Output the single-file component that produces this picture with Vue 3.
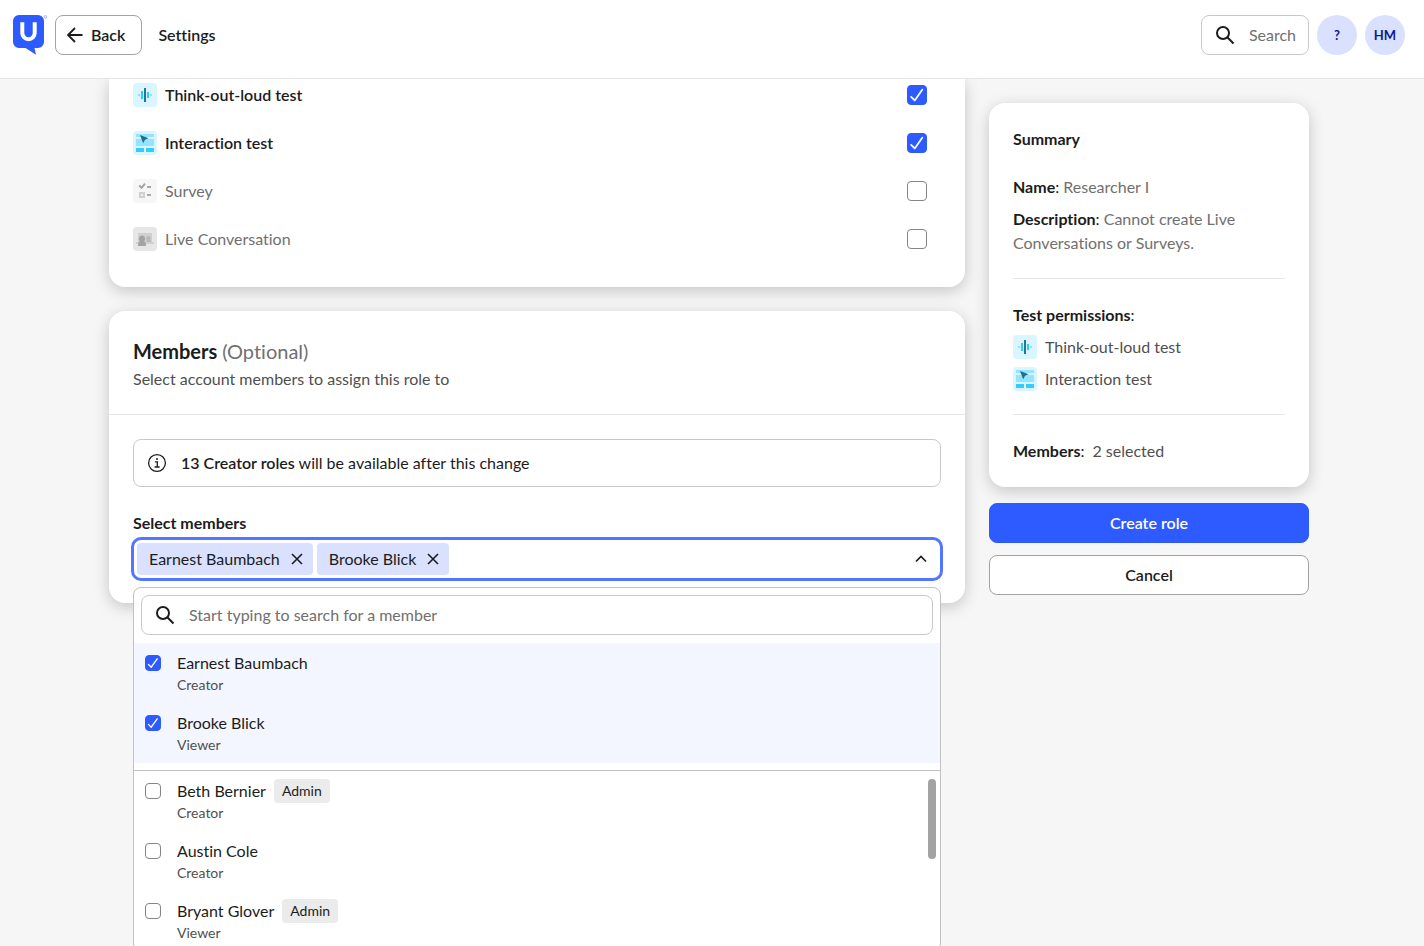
<template>
  <div class="app">
    <header class="topbar">
      <a href="#" class="logo" aria-label="Home">
        <svg width="34" height="40" viewBox="0 0 34 40">
          <path d="M6 0h19a6 6 0 0 1 6 6v21a6 6 0 0 1-6 6h-3.500l1.500 6.800L12.500 33H6a6 6 0 0 1-6-6V6a6 6 0 0 1 6-6z" fill="#2e5bff" />
          <path d="M9.300 7.200v10.800a6.200 6.200 0 0 0 12.400 0V7.200" fill="none" stroke="#fff" stroke-width="4" />
          <circle cx="32.400" cy="1.900" r="1.300" fill="none" stroke="#8aa3ff" stroke-width="0.800" />
        </svg>
      </a>
      <button type="button" class="back-btn">
        <svg width="16" height="16" viewBox="0 0 16 16">
          <path d="M15.500 8H1.200M8 1L1 8l7 7" fill="none" stroke="#1c1c1c" stroke-width="1.800" />
        </svg>
        Back
      </button>
      <span class="page-name">Settings</span>
      <div class="topbar-actions">
        <button type="button" class="search-btn">
          <svg class="search-icon" viewBox="0 0 20 20">
            <circle cx="8" cy="8" r="6" />
            <path d="M12.300 12.300L18.500 18.500" />
          </svg>
          Search
        </button>
        <button type="button" class="round-btn">?</button>
        <button type="button" class="round-btn">HM</button>
      </div>
    </header>

    <div class="scroller">
      <main class="content">
        <div class="main-col">
          <section class="card tests-card">
            <label v-for="test in tests" :key="test.id" class="test-row" :class="{ on: test.checked }">
              <svg class="test-icon" viewBox="0 0 24 24">
                <g v-if="test.id === 'tol'">
                  <rect width="24" height="24" rx="4" fill="#d9f5ff" />
                  <path d="M11 5h2v14h-2z" fill="#1b7a99" />
                  <path d="M8 8h2v8H8zM14 9h2v6h-2z" fill="#33c9fa" />
                  <path d="M5 11h2v2H5zM17 11h2v2h-2z" fill="#8de1fc" />
                </g>
                <g v-else-if="test.id === 'interaction'">
                  <rect width="24" height="24" rx="4" fill="#d9f5ff" />
                  <path d="M3 3h18v3H3zM3 8h18v7H3z" fill="#96e3ff" />
                  <path d="M3 17h8v4H3zM13 17h8v4h-8z" fill="#33ccff" />
                  <path d="M7 4l8.500 3.200-3.500 1.600-1.800 3.400z" fill="#1b6f8f" />
                </g>
                <g v-else-if="test.id === 'survey'">
                  <rect width="24" height="24" rx="4" fill="#f6f6f6" />
                  <path d="M6.200 6.500l2.400 2.300L12 4.600" fill="none" stroke="#a3a3a3" stroke-width="2" />
                  <path d="M14 7h4v2h-4zM14 15h4v2h-4z" fill="#a8a8a8" />
                  <path d="M6 13h6v6H6z" fill="#cfcfcf" />
                  <path d="M8 15h2v2H8z" fill="#f0f0f0" />
                </g>
                <g v-else>
                  <rect width="24" height="24" rx="4" fill="#e6e6e6" />
                  <path d="M5 6h14v9h2v2H3v-2h2z" fill="#d0d0d0" />
                  <path d="M15.500 9a2.300 2.300 0 0 1 1.500 4l1.500 2H13l1-2a2.300 2.300 0 0 1 1.500-4z" fill="#b8b8b8" />
                  <path d="M9 8.500a3.200 3.200 0 0 1 2 5.700c1.300.6 2 1.800 2 4.800H5c0-3 .7-4.200 2-4.800a3.200 3.200 0 0 1 2-5.700z" fill="#a3a3a3" />
                </g>
              </svg>
              <span class="test-name">{{ test.name }}</span>
              <input v-model="test.checked" type="checkbox" class="check check-lg" />
            </label>
          </section>

          <section class="card members-card">
            <div class="members-head">
              <h2>Members <span class="optional">(Optional)</span></h2>
              <p>Select account members to assign this role to</p>
            </div>
            <div class="members-body">
              <div class="notice">
                <svg width="20" height="20" viewBox="0 0 20 20">
                  <circle cx="10" cy="10" r="8.400" fill="none" stroke="#1c1c1c" stroke-width="1.300" />
                  <path d="M8 8.800h2.300V14M7.600 14h5" fill="none" stroke="#1c1c1c" stroke-width="1.300" />
                  <circle cx="10" cy="6" r="1" fill="#1c1c1c" />
                </svg>
                <p><strong>13 Creator roles</strong> will be available after this change</p>
              </div>

              <label for="member-select" class="field-label">Select members</label>
              <div class="select-wrap">
                <div class="select-box">
                  <span v-for="member in selected" :key="member.id" class="chip">
                    {{ member.name }}
                    <button type="button" :aria-label="'Remove ' + member.name" @click="member.checked = false">
                      <svg width="12" height="12" viewBox="0 0 12 12">
                        <path d="M1 1l10 10M11 1L1 11" fill="none" stroke="#1c1c1c" stroke-width="1.600" />
                      </svg>
                    </button>
                  </span>
                  <input id="member-select" type="text" class="select-input" autocomplete="off" />
                  <button type="button" class="toggle" aria-label="Toggle member list" @click="open = !open">
                    <svg width="12" height="8" viewBox="0 0 12 8">
                      <path d="M1 6.500l5-5 5 5" fill="none" stroke="#1c1c1c" stroke-width="1.700" />
                    </svg>
                  </button>
                </div>

                <div v-if="open" class="dropdown">
                  <label class="dropdown-search">
                    <svg class="search-icon" viewBox="0 0 20 20">
                      <circle cx="8" cy="8" r="6" />
                      <path d="M12.300 12.300L18.500 18.500" />
                    </svg>
                    <input type="text" placeholder="Start typing to search for a member" />
                  </label>
                  <div class="picked">
                    <label v-for="member in selected" :key="member.id" class="option">
                      <input v-model="member.checked" type="checkbox" class="check" />
                      <span class="option-text">
                        <span class="option-name">{{ member.name }}</span>
                        <span class="option-role">{{ member.role }}</span>
                      </span>
                    </label>
                  </div>
                  <div class="others">
                    <label v-for="member in unselected" :key="member.id" class="option">
                      <input v-model="member.checked" type="checkbox" class="check" />
                      <span class="option-text">
                        <span class="option-name">
                          {{ member.name }}
                          <span v-if="member.admin" class="tag">Admin</span>
                        </span>
                        <span class="option-role">{{ member.role }}</span>
                      </span>
                    </label>
                    <div class="scroll-thumb"></div>
                  </div>
                </div>
              </div>
            </div>
          </section>
        </div>

        <aside class="side-col">
          <section class="card summary">
            <h3>Summary</h3>
            <div class="summary-part">
              <p class="muted"><strong>Name</strong><span class="colon">:</span> Researcher I</p>
              <p class="muted"><strong>Description</strong><span class="colon">:</span> Cannot create Live Conversations or Surveys.</p>
            </div>
            <div class="summary-part">
              <p><strong>Test permissions</strong>:</p>
              <div class="summary-test">
                <svg class="test-icon" viewBox="0 0 24 24">
                  <rect width="24" height="24" rx="4" fill="#d9f5ff" />
                  <path d="M11 5h2v14h-2z" fill="#1b7a99" />
                  <path d="M8 8h2v8H8zM14 9h2v6h-2z" fill="#33c9fa" />
                  <path d="M5 11h2v2H5zM17 11h2v2h-2z" fill="#8de1fc" />
                </svg>
                Think-out-loud test
              </div>
              <div class="summary-test">
                <svg class="test-icon" viewBox="0 0 24 24">
                  <rect width="24" height="24" rx="4" fill="#d9f5ff" />
                  <path d="M3 3h18v3H3zM3 8h18v7H3z" fill="#96e3ff" />
                  <path d="M3 17h8v4H3zM13 17h8v4h-8z" fill="#33ccff" />
                  <path d="M7 4l8.500 3.200-3.500 1.600-1.800 3.400z" fill="#1b6f8f" />
                </svg>
                Interaction test
              </div>
            </div>
            <p class="summary-members">
              <span><strong>Members</strong>:</span>
              <span class="soft">{{ selected.length }} selected</span>
            </p>
          </section>
          <button type="button" class="btn btn-primary">Create role</button>
          <button type="button" class="btn">Cancel</button>
        </aside>
      </main>
    </div>
  </div>
</template>

<script setup>
import { ref, computed } from 'vue'

const open = ref(true)

const tests = ref([
  { id: 'tol', name: 'Think-out-loud test', checked: true },
  { id: 'interaction', name: 'Interaction test', checked: true },
  { id: 'survey', name: 'Survey', checked: false },
  { id: 'live', name: 'Live Conversation', checked: false }
])

const members = ref([
  { id: 1, name: 'Earnest Baumbach', role: 'Creator', checked: true },
  { id: 2, name: 'Brooke Blick', role: 'Viewer', checked: true },
  { id: 3, name: 'Beth Bernier', role: 'Creator', admin: true, checked: false },
  { id: 4, name: 'Austin Cole', role: 'Creator', checked: false },
  { id: 5, name: 'Bryant Glover', role: 'Viewer', admin: true, checked: false }
])

const selected = computed(() => members.value.filter((m) => m.checked))
const unselected = computed(() => members.value.filter((m) => !m.checked))
</script>

<style>
body {
  margin: 0;
  background: #f6f6f6;
}
</style>

<style scoped>
* {
  box-sizing: border-box;
}

.app {
  display: flex;
  flex-direction: column;
  height: 100vh;
  font-family: Lato, 'Liberation Sans', sans-serif;
  font-size: 16px;
  line-height: 24px;
  font-variant-ligatures: none;
  color: #1c1c1c;
}

h2,
h3,
p {
  margin: 0;
}

button,
input {
  font: inherit;
  font-variant-ligatures: none;
  color: inherit;
}

button {
  cursor: pointer;
}

strong {
  color: #1c1c1c;
  font-weight: 700;
}

svg {
  display: block;
  flex-shrink: 0;
}

/* Top bar */
.topbar {
  position: relative;
  z-index: 2;
  flex-shrink: 0;
  display: flex;
  align-items: center;
  gap: 8px;
  padding: 15px 19px 23px 13px;
  background: #fff;
  border-bottom: 1px solid #e6e6e6;
}

.back-btn {
  display: flex;
  align-items: center;
  gap: 8px;
  height: 40px;
  padding: 0 16px 0 11px;
  border: 1px solid #a3a3a3;
  border-radius: 8px;
  background: #fff;
  font-weight: 600;
}

.page-name {
  margin-left: 8px;
  font-weight: 600;
}

.topbar-actions {
  display: flex;
  gap: 8px;
  margin-left: auto;
}

.search-btn {
  display: flex;
  align-items: center;
  gap: 14px;
  height: 40px;
  padding: 0 12px 0 13px;
  border: 1px solid #c9c9c9;
  border-radius: 8px;
  background: #fff;
  color: #707070;
}

.search-icon {
  width: 20px;
  height: 20px;
  fill: none;
  stroke: #1c1c1c;
  stroke-width: 2;
}

.round-btn {
  width: 40px;
  height: 40px;
  padding: 0;
  border: 0;
  border-radius: 50%;
  background: #dae1ff;
  color: #0b1a8f;
  font-size: 13px;
  font-weight: 700;
}

/* Page */
.scroller {
  flex: 1;
  min-height: 0;
  overflow-y: auto;
  scrollbar-width: none;
  padding: 0 30px 0 24px;
}

.content {
  display: grid;
  grid-template-columns: minmax(0, 1fr) 320px;
  align-items: start;
  gap: 24px;
  max-width: 1200px;
  margin: 0 auto;
}

.main-col {
  display: flex;
  flex-direction: column;
  gap: 24px;
}

.card {
  background: #fff;
  border-radius: 16px;
  box-shadow: 0 4px 16px rgba(0, 0, 0, 0.2);
}

/* Test permissions */
.tests-card {
  display: flex;
  flex-direction: column;
  gap: 24px;
  padding: 4px 38px 36px 24px;
  border-radius: 0 0 16px 16px;
}

.test-row {
  display: flex;
  align-items: center;
  gap: 8px;
  color: #707070;
}

.test-row.on {
  color: #1c1c1c;
  font-weight: 600;
}

.test-icon {
  width: 24px;
  height: 24px;
}

.test-name {
  flex: 1;
}

.check {
  appearance: none;
  flex-shrink: 0;
  width: 16px;
  height: 16px;
  margin: 0;
  border: 1px solid #858585;
  border-radius: 4px;
  background: #fff;
}

.check:checked {
  border-color: #2e5bff;
  background: #2e5bff url("data:image/svg+xml,%3Csvg xmlns='http://www.w3.org/2000/svg' viewBox='0 0 20 20'%3E%3Cpath d='M3.500 12l4 4L16 4' fill='none' stroke='white' stroke-width='1.900' stroke-linecap='round' stroke-linejoin='round'/%3E%3C/svg%3E") center / 100% no-repeat;
}

.check-lg {
  width: 20px;
  height: 20px;
}

/* Members */
.members-head {
  padding: 24px 24px 23px;
  border-bottom: 1px solid #e6e6e6;
}

.members-head h2 {
  font-size: 20px;
  line-height: 32px;
  font-weight: 700;
}

.members-head p {
  color: #4f4f4f;
}

.optional {
  color: #707070;
  font-weight: 400;
}

.members-body {
  padding: 24px;
}

.notice {
  display: flex;
  align-items: center;
  gap: 14px;
  margin-bottom: 24px;
  padding: 11px 13px;
  border: 1px solid #c9c9c9;
  border-radius: 8px;
}

.notice strong {
  font-weight: 600;
}

.field-label {
  display: block;
  margin-bottom: 4px;
  font-weight: 700;
}

.select-wrap {
  position: relative;
}

.select-box {
  display: flex;
  align-items: center;
  gap: 4px;
  padding: 4px;
  border-radius: 8px;
  outline: 3px solid #5475ff;
  outline-offset: -1px;
}

.chip {
  display: flex;
  align-items: center;
  gap: 11px;
  height: 32px;
  padding: 0 10px 0 12px;
  border-radius: 4px;
  background: #dae1ff;
}

.chip button,
.toggle {
  padding: 0;
  border: 0;
  background: none;
}

.select-input {
  flex: 1;
  min-width: 0;
  padding: 0;
  border: 0;
  outline: 0;
  background: none;
}

.toggle {
  padding: 8px 10px;
}

.dropdown {
  position: absolute;
  top: 100%;
  left: 0;
  right: 0;
  margin-top: 8px;
  border: 1px solid #c2c2c2;
  border-radius: 8px;
  background: #fff;
  overflow: hidden;
}

.dropdown-search {
  display: flex;
  align-items: center;
  gap: 14px;
  height: 40px;
  margin: 7px 7px 8px;
  padding: 0 13px;
  border: 1px solid #c9c9c9;
  border-radius: 8px;
}

.dropdown-search input {
  flex: 1;
  min-width: 0;
  padding: 0;
  border: 0;
  outline: 0;
}

.dropdown-search input::placeholder {
  color: #707070;
  opacity: 1;
}

.picked {
  margin-bottom: 7px;
  background: #f3f6ff;
}

.others {
  position: relative;
  border-top: 1px solid #c2c2c2;
}

.option {
  display: flex;
  gap: 16px;
  padding: 8px 11px;
}

.option .check {
  margin-top: 4px;
}

.option-text {
  display: flex;
  flex-direction: column;
}

.option-name {
  display: flex;
  align-items: center;
  gap: 8px;
}

.option-role {
  color: #4f4f4f;
  font-size: 14px;
  line-height: 20px;
}

.tag {
  padding: 0 8px;
  border-radius: 4px;
  background: #ebebeb;
  font-size: 14px;
}

.scroll-thumb {
  position: absolute;
  top: 8px;
  right: 4px;
  width: 8px;
  height: 80px;
  border-radius: 4px;
  background: #a3a3a3;
}

/* Summary */
.side-col {
  display: flex;
  flex-direction: column;
  gap: 12px;
  padding-top: 24px;
}

.summary {
  display: flex;
  flex-direction: column;
  gap: 24px;
  margin-bottom: 4px;
  padding: 24px;
}

.summary h3 {
  font-size: 16px;
  font-weight: 700;
}

.summary-part {
  display: flex;
  flex-direction: column;
  gap: 8px;
  padding-bottom: 23px;
  border-bottom: 1px solid #e6e6e6;
}

.muted {
  color: #707070;
}

.colon {
  color: #1c1c1c;
}

.soft,
.summary-test {
  color: #4f4f4f;
}

.summary-test {
  display: flex;
  gap: 8px;
}

.summary-members {
  display: flex;
  gap: 8px;
}

.btn {
  height: 40px;
  border: 1px solid #a3a3a3;
  border-radius: 8px;
  background: #fff;
  font-weight: 600;
}

.btn-primary {
  border-color: #2e5bff;
  background: #2e5bff;
  color: #fff;
}
</style>
